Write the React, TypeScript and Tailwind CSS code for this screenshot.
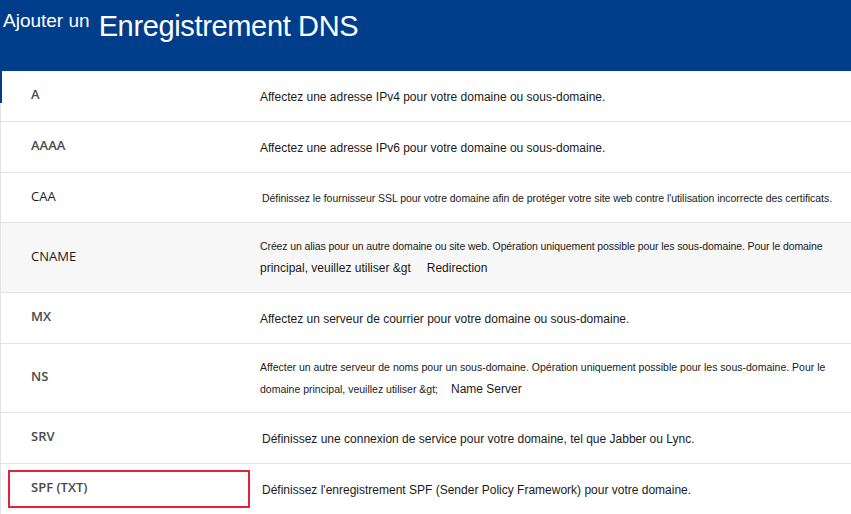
const rows = [
  { label: "A", bold: true, h: "h-[50px]", desc: <span className="text-[12px]">Affectez une adresse IPv4 pour votre domaine ou sous-domaine.</span> },
  { label: "AAAA", bold: true, h: "h-[51px]", desc: <span className="text-[12px]">Affectez une adresse IPv6 pour votre domaine ou sous-domaine.</span> },
  {
    label: "CAA",
    bold: false,
    h: "h-[50px]",
    desc: (
      <span className="pl-[2px] text-[10.5px] tracking-[-0.05px]">
        Définissez le fournisseur SSL pour votre domaine afin de protéger votre site web contre l'utilisation incorrecte des certificats.
      </span>
    ),
  },
  {
    label: "CNAME",
    bold: false,
    h: "h-[70px]",
    gray: true,
    desc: (
      <div className="flex flex-col gap-[5px] pt-[2px]">
        <span className="text-[10.5px] tracking-[-0.1px]">
          Créez un alias pour un autre domaine ou site web. Opération uniquement possible pour les sous-domaine. Pour le domaine
        </span>
        <span className="text-[12px]">
          principal, veuillez utiliser &amp;gt<span className="ml-[16px]">Redirection</span>
        </span>
      </div>
    ),
  },
  { label: "MX", bold: true, h: "h-[51px]", desc: <span className="text-[12px]">Affectez un serveur de courrier pour votre domaine ou sous-domaine.</span> },
  {
    label: "NS",
    bold: true,
    h: "h-[69px]",
    desc: (
      <div className="flex flex-col gap-[4px] pt-[3px]">
        <span className="text-[10.5px]">
          Affecter un autre serveur de noms pour un sous-domaine. Opération uniquement possible pour les sous-domaine. Pour le
        </span>
        <span className="text-[10.5px]">
          domaine principal, veuillez utiliser &amp;gt;<span className="ml-[13px] text-[12px]">Name Server</span>
        </span>
      </div>
    ),
  },
  { label: "SRV", bold: true, h: "h-[51px]", desc: <span className="pl-[2px] text-[12px]">Définissez une connexion de service pour votre domaine, tel que Jabber ou Lync.</span> },
  {
    label: "SPF (TXT)",
    bold: true,
    h: "h-[51px]",
    boxed: true,
    desc: <span className="pl-[2px] text-[12px]">Définissez l'enregistrement SPF (Sender Policy Framework) pour votre domaine.</span>,
  },
];

export default function App() {
  return (
    <div className="relative h-[514px] w-[851px] overflow-hidden bg-white font-['Liberation_Sans',Arial,sans-serif] text-[#1a1a1a]">
      <div className="flex h-[71px] items-start bg-[#003e8c] text-white">
        <span className="ml-[3px] mt-[7px] text-[19px]">Ajouter un</span>
        <span className="ml-[9px] mt-[5px] text-[29px] tracking-[-0.35px]">Enregistrement DNS</span>
      </div>
      <div className="absolute left-0 top-[71px] h-[32px] border-l-2 border-[#003e8c]" />
      <div className="flex flex-col">
        {rows.map((r, i) => (
          <div
            key={r.label}
            className={`flex items-center border-l border-[#e3e3e3] ${i > 0 ? "border-t" : ""} ${r.h} ${r.gray ? "bg-[#f7f7f7]" : "bg-white"}`}
          >
            <div className="relative flex h-full w-[259px] shrink-0 items-center pb-[2px] pl-[30px]">
              {r.boxed && <div className="absolute bottom-[6px] left-[7px] top-[6px] w-[242px] border-2 border-[#e8203a]" />}
              <span
                className={
                  r.bold
                    ? "font-['Open_Sans',sans-serif] text-[13px] font-semibold text-[#4a4a4a]"
                    : "font-['Open_Sans',sans-serif] text-[13px] text-[#1a1a1a]"
                }
              >
                {r.label}
              </span>
            </div>
            <div className="pb-[1px]">{r.desc}</div>
          </div>
        ))}
      </div>
    </div>
  );
}
